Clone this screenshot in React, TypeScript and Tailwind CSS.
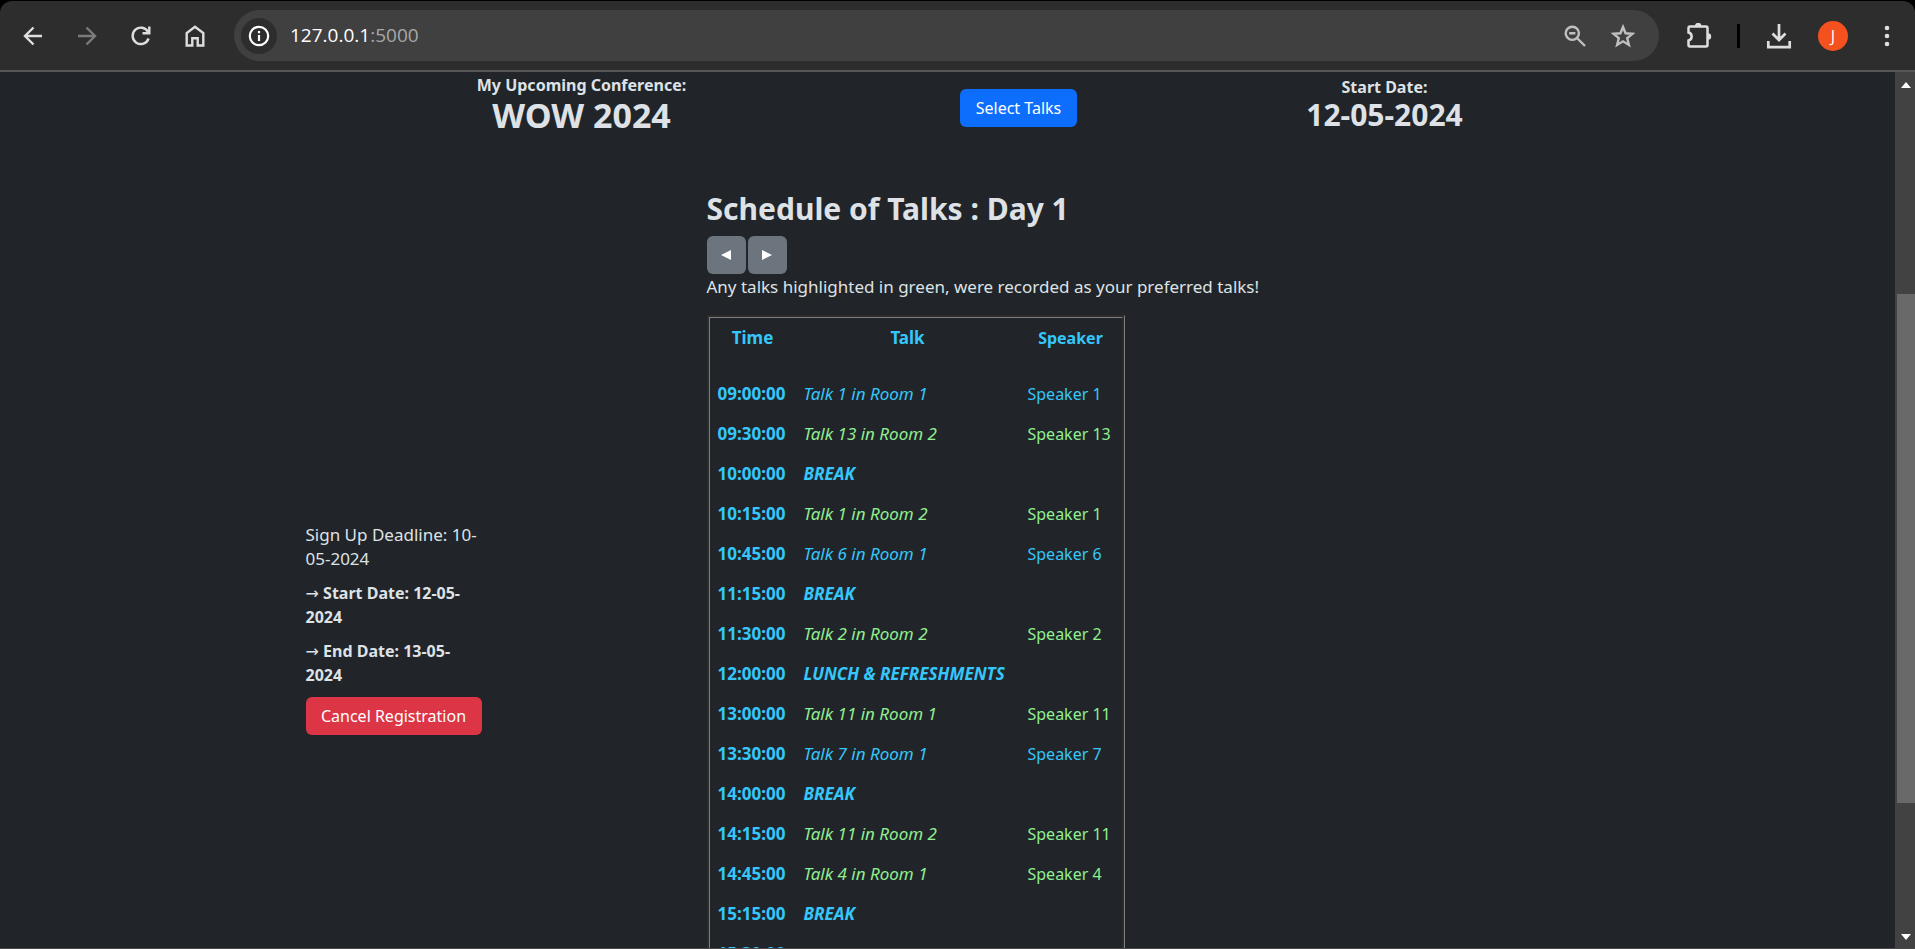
import React from "react";

type Row = { time: string; talk: string; speaker?: string; preferred?: boolean };

const rows: Row[] = [
  { time: "09:00:00", talk: "Talk 1 in Room 1", speaker: "Speaker 1" },
  { time: "09:30:00", talk: "Talk 13 in Room 2", speaker: "Speaker 13", preferred: true },
  { time: "10:00:00", talk: "BREAK" },
  { time: "10:15:00", talk: "Talk 1 in Room 2", speaker: "Speaker 1", preferred: true },
  { time: "10:45:00", talk: "Talk 6 in Room 1", speaker: "Speaker 6" },
  { time: "11:15:00", talk: "BREAK" },
  { time: "11:30:00", talk: "Talk 2 in Room 2", speaker: "Speaker 2", preferred: true },
  { time: "12:00:00", talk: "LUNCH & REFRESHMENTS" },
  { time: "13:00:00", talk: "Talk 11 in Room 1", speaker: "Speaker 11", preferred: true },
  { time: "13:30:00", talk: "Talk 7 in Room 1", speaker: "Speaker 7" },
  { time: "14:00:00", talk: "BREAK" },
  { time: "14:15:00", talk: "Talk 11 in Room 2", speaker: "Speaker 11", preferred: true },
  { time: "14:45:00", talk: "Talk 4 in Room 1", speaker: "Speaker 4", preferred: true },
  { time: "15:15:00", talk: "BREAK" },
  { time: "15:30:00", talk: "Talk 5 in Room 1", speaker: "Speaker 5", preferred: true },
];

function IconButton({ label, children, className = "" }: { label: string; children: React.ReactNode; className?: string }) {
  return (
    <button type="button" aria-label={label} className={`flex size-8 shrink-0 items-center justify-center ${className}`}>
      {children}
    </button>
  );
}

function BrowserBar() {
  return (
    <header className="shrink-0 bg-black pt-px">
      <div className="flex h-[71px] items-center rounded-t-xl border-b-2 border-[#575757] bg-[#2d2d2d] pr-3 pl-[17px] text-[#dedede]">
        <nav aria-label="Browser" className="flex shrink-0 gap-[22px]">
          <IconButton label="Back">
            <svg width="20" height="20" viewBox="0 0 20 20" fill="none" stroke="currentColor" strokeWidth="2.4">
              <path d="M19 10H2.5M10.5 1.5L2 10l8.5 8.5" />
            </svg>
          </IconButton>
          <IconButton label="Forward" className="text-[#7b7b7b]">
            <svg width="20" height="20" viewBox="0 0 20 20" fill="none" stroke="currentColor" strokeWidth="2.4">
              <path d="M1 10h16.5M9.5 1.5L18 10l-8.5 8.5" />
            </svg>
          </IconButton>
          <IconButton label="Reload">
            <svg width="22" height="22" viewBox="0 0 22 22" fill="none" stroke="currentColor" strokeWidth="2.4">
              <path d="M18.6 13.5A8.2 8.2 0 1 1 18.2 7.2" />
              <path d="M19.3 1.5V8.3H12.5" />
            </svg>
          </IconButton>
          <IconButton label="Home">
            <svg width="22" height="24" viewBox="0 0 22 24" fill="none" stroke="currentColor" strokeWidth="2.4">
              <path d="M2.7 21.5V9L11 2.7L19.3 9v12.5h-5.6v-7.3H8.3v7.3z" />
            </svg>
          </IconButton>
        </nav>
        <div className="ml-[23px] flex h-[51px] min-w-0 flex-1 items-center rounded-full bg-[#404040] pr-5 pl-[7px]">
          <button type="button" aria-label="Site information" className="flex size-9 shrink-0 items-center justify-center rounded-full bg-[#2d2d2d] text-white">
            <svg width="22" height="22" viewBox="0 0 22 22" fill="none" stroke="currentColor" strokeWidth="2.2">
              <circle cx="11" cy="11" r="9.2" />
              <path d="M11 10v6M11 6v2.2" />
            </svg>
          </button>
          <a href="http://127.0.0.1:5000" className="ml-[13px] flex-1 font-['Open_Sans',sans-serif] text-[19px] text-[#a8a8a8]">
            <span className="text-white">127.0.0.1</span>:5000
          </a>
          <div className="flex gap-4 text-[#c0c0c0]">
            <IconButton label="Zoom">
              <svg width="22" height="22" viewBox="0 0 22 22" fill="none" stroke="currentColor" strokeWidth="2.4">
                <circle cx="8.3" cy="8.3" r="6.6" />
                <path d="M13 13l8 8M5.2 8.3h6.2" />
              </svg>
            </IconButton>
            <IconButton label="Bookmark">
              <svg width="24" height="24" viewBox="0 0 24 24" fill="none" stroke="currentColor" strokeWidth="2.4">
                <path d="M12 3l2.6 6.3 6.8.5-5.2 4.4 1.7 6.7L12 17.3l-5.9 3.6 1.7-6.7L2.6 9.8l6.8-.5z" />
              </svg>
            </IconButton>
          </div>
        </div>
        <div className="ml-6 flex shrink-0 items-center">
          <IconButton label="Extensions">
            <svg width="26" height="26" viewBox="0 0 26 26" fill="none" stroke="currentColor" strokeWidth="2.5">
              <path d="M4.5 3.5H20a1.5 1.5 0 0 1 1.5 1.5V22a1.5 1.5 0 0 1-1.5 1.5H4A1.5 1.5 0 0 1 2.5 22v-4.5c4.2-.8 4.2-7.2 0-8V5A1.5 1.5 0 0 1 4 3.5z" />
              <path d="M9 3a3.2 3.2 0 0 1 6.4 0zM22 10.3a3.2 3.2 0 0 1 0 6.4z" fill="currentColor" stroke="none" />
            </svg>
          </IconButton>
          <span className="ml-[22px] h-6 w-[3px] bg-black" />
          <IconButton label="Downloads" className="ml-[23px]">
            <svg width="26" height="26" viewBox="0 0 26 26" fill="none" stroke="currentColor" strokeWidth="2.7">
              <path d="M13 1v15.5M6.5 10.5L13 17l6.5-6.5M2.3 18v6.2h21.4V18" />
            </svg>
          </IconButton>
          <button type="button" aria-label="Profile" className="ml-[23px] flex size-[30px] items-center justify-center rounded-full bg-[#f4511e] font-['Open_Sans',sans-serif] text-base text-white">
            J
          </button>
          <IconButton label="Menu" className="ml-[23px]">
            <svg width="6" height="24" viewBox="0 0 6 24" fill="currentColor">
              <circle cx="3" cy="4" r="2.3" />
              <circle cx="3" cy="12" r="2.3" />
              <circle cx="3" cy="20" r="2.3" />
            </svg>
          </IconButton>
        </div>
      </div>
    </header>
  );
}

function ConferenceHeader() {
  return (
    <div className="grid grid-cols-[588fr_286fr_446fr] items-center justify-items-center pt-px text-center">
      <h1 className="mb-[10px] font-bold">
        <span className="block text-base leading-6">My Upcoming Conference:</span>
        <span className="block text-[34px] leading-9">WOW 2024</span>
      </h1>
      <button type="button" className="h-[38px] rounded-md bg-[#0d6efd] px-4 text-white">
        Select Talks
      </button>
      <h2 className="mb-[10px] font-bold">
        <span className="block text-base leading-6">Start Date:</span>
        <span className="block text-[30px] leading-8">12-05-2024</span>
      </h2>
    </div>
  );
}

function DateLine({ children }: { children: React.ReactNode }) {
  return (
    <p className="mb-[10px] text-base font-bold">
      <span className="font-['DejaVu_Sans',sans-serif] leading-none font-normal">→</span> {children}
    </p>
  );
}

function Registration() {
  return (
    <aside className="w-44 shrink-0">
      <p className="mb-[10px] text-[17px] leading-6">Sign Up Deadline: 10-05-2024</p>
      <DateLine>Start Date: 12-05-2024</DateLine>
      <DateLine>End Date: 13-05-2024</DateLine>
      <button type="button" className="h-[38px] w-full rounded-md bg-[#dc3545] whitespace-nowrap text-white">
        Cancel Registration
      </button>
    </aside>
  );
}

function Schedule() {
  return (
    <section className="pb-[88px]">
      <h2 className="mb-[10px] text-[30px] leading-[34px] font-bold">Schedule of Talks : Day 1</h2>
      <div className="mb-px flex gap-[2px] text-white">
        <button type="button" aria-label="Previous day" className="flex h-[38px] w-[39px] items-center justify-center rounded-md bg-[#6c757d]">
          <svg width="10" height="10" viewBox="0 0 10 10" fill="currentColor"><path d="M0 5L10 0v10z" /></svg>
        </button>
        <button type="button" aria-label="Next day" className="flex h-[38px] w-[39px] items-center justify-center rounded-md bg-[#6c757d]">
          <svg width="10" height="10" viewBox="0 0 10 10" fill="currentColor"><path d="M10 5L0 0v10z" /></svg>
        </button>
      </div>
      <p className="mb-4 text-[17px] leading-6">Any talks highlighted in green, were recorded as your preferred talks!</p>
      <table className="border-separate border-spacing-0 border-[3px] border-[#808080] text-left text-[17px] leading-6 whitespace-nowrap text-[#35c7fb] [border-style:groove]">
        <thead>
          <tr className="text-center">
            <th className="w-[86px] px-2 pt-2 pb-6">Time</th>
            <th className="w-56 px-2 pt-2 pb-6">Talk</th>
            <th className="w-[102px] px-2 pt-2 pb-6 text-base">Speaker</th>
          </tr>
        </thead>
        <tbody>
          {rows.map((row) => (
            <tr key={row.time} className={row.preferred ? "text-[#90ee90]" : "text-[#35c7fb]"}>
              <th scope="row" className="p-2 text-[#35c7fb]">{row.time}</th>
              <td className={row.speaker ? "p-2 italic" : "p-2 font-bold italic"}>{row.talk}</td>
              <td className="p-2 text-base">{row.speaker}</td>
            </tr>
          ))}
        </tbody>
      </table>
    </section>
  );
}

function ScrollTrack() {
  return (
    <div aria-hidden="true" className="flex w-5 shrink-0 flex-col items-center bg-[#424242] pt-[10px] pb-2 pl-[2px]">
      <svg width="10" height="6" viewBox="0 0 10 6" fill="#fff"><path d="M5 0l5 6H0z" /></svg>
      <div className="flex w-full flex-1 flex-col py-[6px]">
        <div className="grow-[200]" />
        <div className="grow-[508] bg-[#696969]" />
        <div className="grow-[125]" />
      </div>
      <svg width="10" height="6" viewBox="0 0 10 6" fill="#fff"><path d="M5 6l5-6H0z" /></svg>
    </div>
  );
}

export default function App() {
  return (
    <div className="flex h-screen flex-col overflow-hidden bg-[#212529] font-['Noto_Sans',sans-serif] text-base text-[#dee2e6]">
      <BrowserBar />
      <div className="flex min-h-0 flex-1 border-b border-[#484848]">
        <main className="min-w-0 flex-1 overflow-hidden">
          <div className="mx-auto max-w-[1320px]">
            <ConferenceHeader />
            <div className="flex items-center gap-[225px] pt-[49px] pl-[18px]">
              <Registration />
              <Schedule />
            </div>
          </div>
        </main>
        <ScrollTrack />
      </div>
    </div>
  );
}
